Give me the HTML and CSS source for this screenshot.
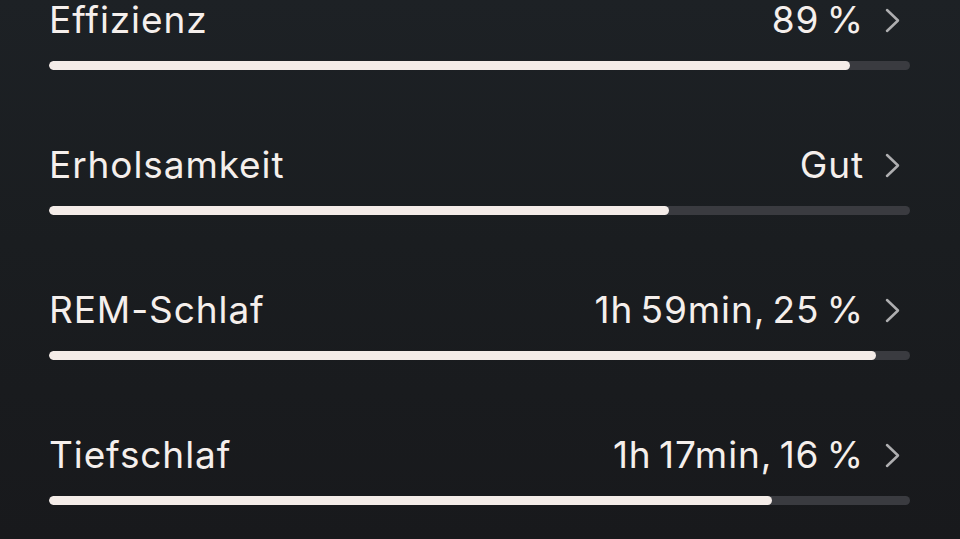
FILE: index.html
```html
<!DOCTYPE html>
<html lang="de">
<head>
<meta charset="utf-8">
<title>Schlaf</title>
<link rel="stylesheet" href="styles.css">
</head>
<body>
<main class="list">
  <section class="metric">
    <div class="head">
      <span class="label">Effizienz</span>
      <span class="value">89 %</span>
      <svg class="chev" viewBox="0 0 15 25" width="15" height="25"><polyline points="2,2 13,12.5 2,23"/></svg>
    </div>
    <div class="track"><div class="fill" style="width:93%"></div></div>
  </section>
  <section class="metric">
    <div class="head">
      <span class="label">Erholsamkeit</span>
      <span class="value">Gut</span>
      <svg class="chev" viewBox="0 0 15 25" width="15" height="25"><polyline points="2,2 13,12.5 2,23"/></svg>
    </div>
    <div class="track"><div class="fill" style="width:72%"></div></div>
  </section>
  <section class="metric">
    <div class="head">
      <span class="label">REM-Schlaf</span>
      <span class="value">1h 59min, 25 %</span>
      <svg class="chev" viewBox="0 0 15 25" width="15" height="25"><polyline points="2,2 13,12.5 2,23"/></svg>
    </div>
    <div class="track"><div class="fill" style="width:96%"></div></div>
  </section>
  <section class="metric">
    <div class="head">
      <span class="label">Tiefschlaf</span>
      <span class="value">1h 17min, 16 %</span>
      <svg class="chev" viewBox="0 0 15 25" width="15" height="25"><polyline points="2,2 13,12.5 2,23"/></svg>
    </div>
    <div class="track"><div class="fill" style="width:84%"></div></div>
  </section>
</main>
</body>
</html>
```
FILE: styles.css
```css
html, body {
  margin: 0;
  height: 100%;
}
body {
  background: linear-gradient(180deg, #1d2125 0%, #1a1d20 45%, #18191c 100%);
  color: #f5efec;
  font-family: Inter, "Noto Sans", sans-serif;
  overflow: hidden;
}
.list {
  display: flex;
  flex-direction: column;
  gap: 77px;
  padding: 2px 50px 0 49px;
}
.metric {
  display: flex;
  flex-direction: column;
  gap: 23px;
}
.head {
  display: flex;
  align-items: center;
  height: 36px;
  font-size: 37px;
  line-height: 36px;
  font-weight: 400;
  letter-spacing: 0.9px;
}
.label {
  flex: 1;
}
.value {
  margin-right: 21px;
  word-spacing: -4px;
}
.chev {
  fill: none;
  stroke: #aeaeb0;
  stroke-width: 2.5;
  stroke-linecap: round;
  stroke-linejoin: round;
  margin-right: 10px;
}
.track {
  height: 9px;
  border-radius: 5px;
  background: #3a3b40;
  overflow: hidden;
}
.fill {
  height: 100%;
  border-radius: 5px;
  background: #f4ece8;
}
```
